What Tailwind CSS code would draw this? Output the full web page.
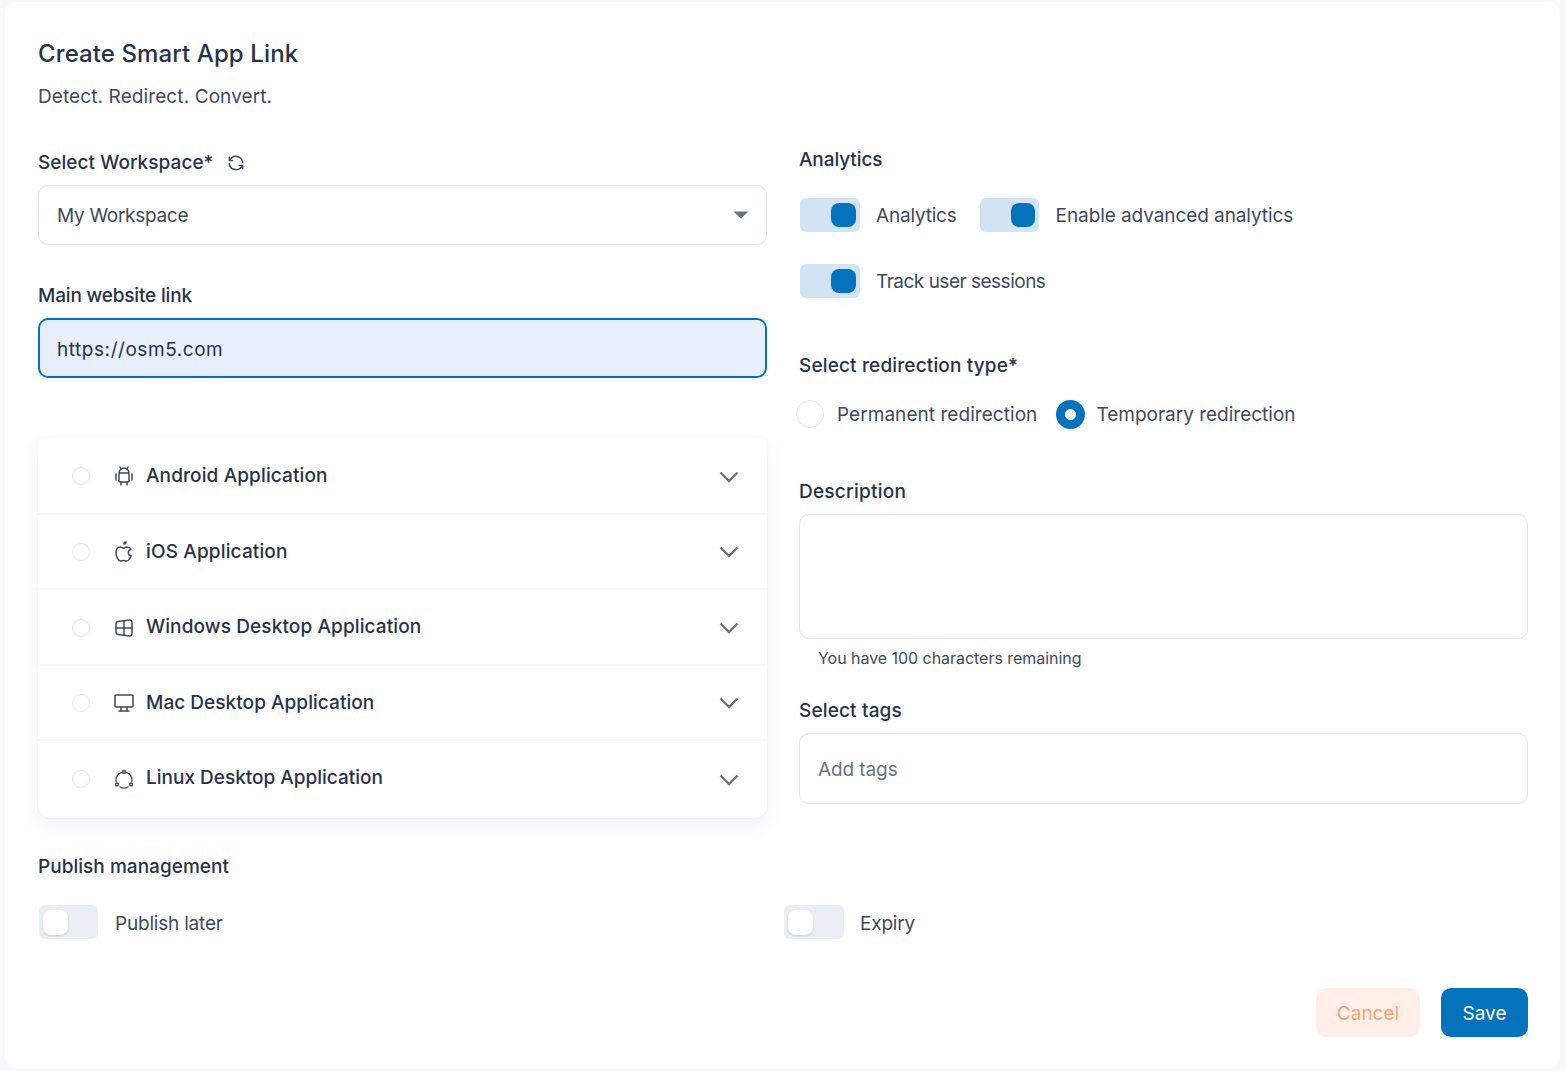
<!DOCTYPE html>
<html lang="en">
<head>
<meta charset="utf-8">
<script src="https://cdn.jsdelivr.net/npm/@tailwindcss/browser@4"></script>
<title>Create Smart App Link</title>
</head>
<body class="m-0 h-[1071px] overflow-hidden bg-[#f8f8fb] pt-[2px] pr-[6px] pl-[5px] pb-[2px] font-['Inter',sans-serif] text-[#273349]">
<div class="h-[1067px] rounded-xl bg-white pt-[37px] pr-[32px] pl-[33px]">
  <h1 class="h-[30px] text-[24px] leading-[30px] font-medium tracking-[0.1px] text-[#273349]">Create Smart App Link</h1>
  <p class="mt-[16px] h-[24px] text-[19px] leading-[24px] tracking-[0.1px] text-[#3e4a5e]">Detect. Redirect. Convert.</p>

  <div class="mt-[27px] grid grid-cols-[729px_729px] gap-x-[32px]">
    <!-- Left -->
    <div>
      <div class="mt-[14px] flex h-[24px] items-center gap-[12px]">
        <span class="pt-[2px] text-[19px] leading-[24px] font-medium tracking-[0.05px]">Select Workspace*</span>
        <svg class="mt-[2px] h-[20px] w-[20px] text-[#3e4a5e]" viewBox="0 0 24 24" fill="none" stroke="currentColor" stroke-width="1.8" stroke-linecap="round" stroke-linejoin="round"><path d="M20 11a8.100 8.100 0 0 0 -15.500 -2m-.5 -4v4h4"/><path d="M4 13a8.100 8.100 0 0 0 15.500 2m.5 4v-4h-4"/></svg>
      </div>
      <div class="mt-[11px] flex h-[60px] items-center justify-between rounded-[10px] border border-[#e1e5ee] pr-[17px] pl-[18px]">
        <span class="pt-[2px] text-[19px] tracking-[-0.3px] text-[#3e4a5e]">My Workspace</span>
        <svg class="h-[8px] w-[16px] text-[#6b7280]" viewBox="0 0 16 8" fill="currentColor"><path d="M0.500 0.500h15L8 7.500z"/></svg>
      </div>

      <div class="mt-[38px] h-[24px] text-[19px] leading-[26px] font-medium tracking-[-0.18px]">Main website link</div>
      <div class="mt-[11px] flex h-[60px] items-center rounded-[10px] border-2 border-[#0573bb] bg-[#e8f0fe] pt-[5px] pl-[17px] text-[19px] tracking-[0.55px] text-[#273349]">https://osm5.com</div>

      <div class="mt-[60px] h-[380px] rounded-b-xl bg-white shadow-[0_8px_20px_rgba(70,80,130,0.07),0_0_2px_rgba(70,80,130,0.10)]">
        <div class="flex h-[77px] items-center border-b-2 border-[#f6f6fb] pr-[28px] pl-[34px]">
          <span class="h-[18px] w-[18px] rounded-full border border-[#e1e5ee]"></span>
          <svg class="ml-[22px] h-[24px] w-[24px] text-[#3e4a5e]" viewBox="0 0 24 24" fill="none" stroke="currentColor" stroke-width="1.500" stroke-linecap="round" stroke-linejoin="round"><path d="M4 10v6"/><path d="M20 10v6"/><path d="M7 9h10v8a1 1 0 0 1 -1 1h-8a1 1 0 0 1 -1 -1v-8a5 5 0 0 1 10 0"/><path d="M8 3l1 2"/><path d="M16 3l-1 2"/><path d="M9 18v3"/><path d="M15 18v3"/></svg>
          <span class="ml-[10px] flex-1 pt-[2px] text-[19px] font-medium tracking-[0.12px]">Android Application</span>
          <svg class="mt-[2px] h-[12px] w-[20px] text-[#6b7280]" viewBox="0 0 20 12" fill="none" stroke="currentColor" stroke-width="2.400"><path d="M1.500 1.500L10 10L18.500 1.500"/></svg>
        </div>
        <div class="flex h-[75px] items-center border-b-2 border-[#f6f6fb] pr-[28px] pl-[34px]">
          <span class="h-[18px] w-[18px] rounded-full border border-[#e1e5ee]"></span>
          <svg class="ml-[22px] h-[24px] w-[24px] text-[#3e4a5e]" viewBox="0 0 24 24" fill="none" stroke="currentColor" stroke-width="1.500" stroke-linecap="round" stroke-linejoin="round"><path d="M8.286 7.008c-3.216 0 -4.286 3.230 -4.286 5.920c0 3.229 2.143 8.072 4.286 8.072c1.165 -.05 1.799 -.538 3.214 -.538c1.406 0 1.607 .538 3.214 .538s4.286 -3.229 4.286 -5.381c-.03 -.011 -2.649 -.434 -2.679 -3.230c-.02 -2.335 2.589 -3.179 2.679 -3.228c-1.096 -1.606 -3.162 -2.113 -3.750 -2.153c-1.535 -.12 -3.032 1.077 -3.750 1.077c-.729 0 -2.036 -1.077 -3.214 -1.077z"/><path d="M12 4a2 2 0 0 0 2 -2a2 2 0 0 0 -2 2"/></svg>
          <span class="ml-[10px] flex-1 pt-[2px] text-[19px] font-medium tracking-[0.15px]">iOS Application</span>
          <svg class="h-[12px] w-[20px] text-[#6b7280]" viewBox="0 0 20 12" fill="none" stroke="currentColor" stroke-width="2.400"><path d="M1.500 1.500L10 10L18.500 1.500"/></svg>
        </div>
        <div class="flex h-[76px] items-center border-b-2 border-[#f6f6fb] pr-[28px] pl-[34px]">
          <span class="mt-[1px] h-[18px] w-[18px] rounded-full border border-[#e1e5ee]"></span>
          <svg class="mt-[1px] ml-[22px] h-[24px] w-[24px] text-[#3e4a5e]" viewBox="0 0 24 24" fill="none" stroke="currentColor" stroke-width="1.500" stroke-linecap="round" stroke-linejoin="round"><path d="M17.800 20l-12 -1.500c-1 -.1 -1.800 -.9 -1.800 -1.900v-9.200c0 -1 .8 -1.800 1.800 -1.900l12 -1.500c1.200 -.1 2.200 .8 2.200 1.900v12.100c0 1.200 -1.100 2.100 -2.200 1.900z"/><path d="M12 5v14"/><path d="M4 12h16"/></svg>
          <span class="ml-[10px] flex-1 text-[19px] font-medium tracking-[0.12px]">Windows Desktop Application</span>
          <svg class="mt-[2px] h-[12px] w-[20px] text-[#6b7280]" viewBox="0 0 20 12" fill="none" stroke="currentColor" stroke-width="2.400"><path d="M1.500 1.500L10 10L18.500 1.500"/></svg>
        </div>
        <div class="flex h-[75px] items-center border-b-2 border-[#f6f6fb] pr-[28px] pl-[34px]">
          <span class="h-[18px] w-[18px] rounded-full border border-[#e1e5ee]"></span>
          <svg class="ml-[22px] h-[24px] w-[24px] text-[#3e4a5e]" viewBox="0 0 24 24" fill="none" stroke="currentColor" stroke-width="1.500" stroke-linecap="round" stroke-linejoin="round"><path d="M3 5a1 1 0 0 1 1 -1h16a1 1 0 0 1 1 1v10a1 1 0 0 1 -1 1h-16a1 1 0 0 1 -1 -1z"/><path d="M7 20h10"/><path d="M9 16v4"/><path d="M15 16v4"/></svg>
          <span class="ml-[10px] flex-1 pt-[2px] text-[19px] font-medium tracking-[0.05px]">Mac Desktop Application</span>
          <svg class="h-[12px] w-[20px] text-[#6b7280]" viewBox="0 0 20 12" fill="none" stroke="currentColor" stroke-width="2.400"><path d="M1.500 1.500L10 10L18.500 1.500"/></svg>
        </div>
        <div class="flex h-[77px] items-center pr-[28px] pl-[34px]">
          <span class="mb-[2px] h-[18px] w-[18px] rounded-full border border-[#e1e5ee]"></span>
          <svg class="mb-[1px] ml-[22px] h-[24px] w-[24px] text-[#3e4a5e]" viewBox="0 0 24 24" fill="none" stroke="currentColor" stroke-width="1.400" stroke-linecap="round" stroke-linejoin="round"><circle cx="12" cy="5" r="1.500"/><circle cx="5" cy="17.500" r="1.500"/><circle cx="19" cy="17.500" r="1.500"/><path d="M9.500 5.400A8 8 0 0 0 4.100 14.500"/><path d="M14.500 5.400A8 8 0 0 1 19.900 14.500"/><path d="M8 20A8 8 0 0 0 16 20"/></svg>
          <span class="ml-[10px] flex-1 pb-[3px] text-[19px] font-medium tracking-[0px]">Linux Desktop Application</span>
          <svg class="h-[12px] w-[20px] text-[#6b7280]" viewBox="0 0 20 12" fill="none" stroke="currentColor" stroke-width="2.400"><path d="M1.500 1.500L10 10L18.500 1.500"/></svg>
        </div>
      </div>
    </div>

    <!-- Right -->
    <div>
      <div class="mt-[11px] h-[24px] text-[19px] leading-[26px] font-medium tracking-[-0.1px]">Analytics</div>
      <div class="mt-[27px] ml-[1px] flex h-[34px] items-center">
        <span class="flex h-[34px] w-[60px] items-center justify-end rounded-[6px] bg-[#d2e4f3] pr-[4px]"><span class="h-[24px] w-[25px] rounded-[8px] bg-[#0573bb]"></span></span>
        <span class="ml-[16px] pt-[2px] text-[19px] tracking-[-0.2px] text-[#3e4a5e]">Analytics</span>
        <span class="ml-[23px] flex h-[34px] w-[59px] items-center justify-end rounded-[6px] bg-[#d2e4f3] pr-[4px]"><span class="h-[24px] w-[24px] rounded-[8px] bg-[#0573bb]"></span></span>
        <span class="ml-[17px] pt-[2px] text-[19px] tracking-[-0.08px] text-[#3e4a5e]">Enable advanced analytics</span>
      </div>
      <div class="mt-[32px] ml-[1px] flex h-[34px] items-center">
        <span class="flex h-[34px] w-[60px] items-center justify-end rounded-[6px] bg-[#d2e4f3] pr-[4px]"><span class="h-[24px] w-[25px] rounded-[8px] bg-[#0573bb]"></span></span>
        <span class="ml-[16px] pt-[2px] text-[19px] tracking-[-0.5px] text-[#3e4a5e]">Track user sessions</span>
      </div>
      <div class="mt-[55px] h-[24px] text-[19px] leading-[26px] font-medium tracking-[0.15px]">Select redirection type*</div>
      <div class="mt-[23px] ml-[-3px] flex h-[28px] items-center">
        <span class="h-[28px] w-[28px] rounded-full border border-[#e1e5ee]"></span>
        <span class="ml-[13px] pt-[2px] text-[19px] tracking-[0.05px] text-[#3e4a5e]">Permanent redirection</span>
        <span class="ml-[19px] h-[29px] w-[29px] rounded-full border-[9px] border-[#0573bb] bg-white"></span>
        <span class="ml-[11px] pt-[2px] text-[19px] tracking-[0px] text-[#3e4a5e]">Temporary redirection</span>
      </div>
      <div class="mt-[51px] h-[24px] text-[19px] leading-[26px] font-medium tracking-[0.25px]">Description</div>
      <div class="mt-[11px] h-[125px] rounded-[10px] border border-[#e1e5ee]"></div>
      <div class="mt-[9px] h-[20px] pl-[19px] text-[16px] leading-[20px] tracking-[-0.04px] text-[#3e4a5e]">You have 100 characters remaining</div>
      <div class="mt-[30px] h-[24px] text-[19px] leading-[26px] font-medium tracking-[0.15px]">Select tags</div>
      <div class="mt-[11px] flex h-[71px] items-center rounded-[10px] border border-[#e1e5ee] pt-[3px] pl-[18px] text-[19px] tracking-[-0.1px] text-[#6b7280]">Add tags</div>
    </div>
  </div>

  <div class="mt-[36px] h-[24px] text-[19px] leading-[26px] font-medium tracking-[0.03px]">Publish management</div>
  <div class="mt-[27px] grid grid-cols-[746px_1fr]">
    <div class="flex h-[34px] items-center">
      <span class="ml-[1px] flex h-[34px] w-[59px] items-center rounded-[6px] bg-[#e9edf4] pl-[4px]"><span class="h-[25px] w-[25px] rounded-[8px] bg-white shadow-[0_1px_2px_rgba(100,110,150,0.25)]"></span></span>
      <span class="ml-[17px] pt-[5px] text-[19px] tracking-[-0.2px] text-[#3e4a5e]">Publish later</span>
    </div>
    <div class="flex h-[34px] items-center">
      <span class="flex h-[34px] w-[60px] items-center rounded-[6px] bg-[#e9edf4] pl-[4px]"><span class="h-[25px] w-[25px] rounded-[8px] bg-white shadow-[0_1px_2px_rgba(100,110,150,0.25)]"></span></span>
      <span class="ml-[16px] pt-[5px] text-[19px] tracking-[-0.2px] text-[#3e4a5e]">Expiry</span>
    </div>
  </div>
  <div class="mt-[49px] flex justify-end gap-[21px]">
    <button class="h-[49px] w-[104px] rounded-[10px] bg-[#ffefe8] pt-[3px] text-[19px] text-[#f4a27a]">Cancel</button>
    <button class="h-[49px] w-[87px] rounded-[10px] bg-[#0573bb] pt-[3px] text-[19px] text-white">Save</button>
  </div>
</div>
</body>
</html>
